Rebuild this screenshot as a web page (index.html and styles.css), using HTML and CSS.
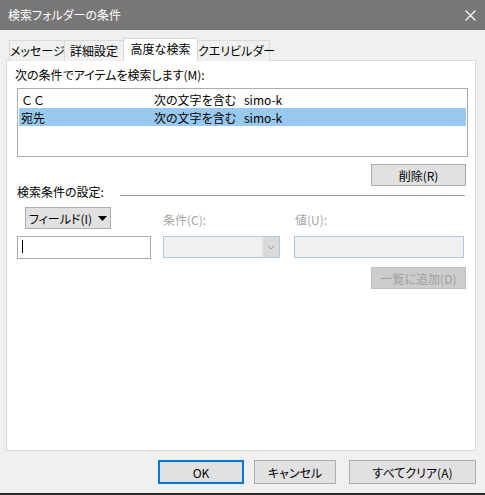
FILE: index.html
```html
<!DOCTYPE html>
<html lang="ja">
<head>
  <meta charset="UTF-8" />
  <meta name="viewport" content="width=device-width, initial-scale=1.0" />
  <title>検索フォルダーの条件</title>
  <link rel="stylesheet" href="styles.css">
</head>
<body>
  <div class="window">
    <div class="titlebar">
      <span>検索フォルダーの条件</span>
      <svg class="close" width="11" height="11" viewBox="0 0 11 11">
        <path d="M0.5 0.5 L10.5 10.5 M10.5 0.5 L0.5 10.5" stroke="#fff" stroke-width="1.1" fill="none" />
      </svg>
    </div>

    <div class="content">
      <div class="tabs">
        <div class="tab tab-msg">メッセージ</div>
        <div class="tab tab-detail">詳細設定</div>
        <div class="tab tab-adv active">高度な検索</div>
        <div class="tab tab-query">クエリビルダー</div>
      </div>

      <div class="panel">
        <div class="label">次の条件でアイテムを検索します(M):</div>
        <div class="listbox">
          <div class="row">
            <span class="col-field fullwidth">ＣＣ</span>
            <span class="col-cond">次の文字を含む</span>
            <span>simo-k</span>
          </div>
          <div class="row selected">
            <span class="col-field">宛先</span>
            <span class="col-cond">次の文字を含む</span>
            <span>simo-k</span>
          </div>
        </div>
        <div class="actions">
          <button class="btn side-btn">削除(R)</button>
        </div>

        <div class="group-head">
          <span class="group-title">検索条件の設定:</span>
          <span class="rule"></span>
        </div>

        <div class="criteria">
          <button class="btn field-btn">
            <span>フィールド(I)</span>
            <svg width="9" height="5" viewBox="0 0 9 5"><path d="M0 0 H9 L4.5 5 Z" fill="#000" /></svg>
          </button>
          <div class="crit-label">条件(C):</div>
          <div class="crit-label value-label">値(U):</div>

          <div class="textbox"><span class="caret"></span></div>
          <div class="combo">
            <span class="combo-arrow">
              <svg width="8" height="5" viewBox="0 0 8 5"><path d="M0.5 0.5 L4 4 L7.5 0.5" stroke="#a8a8a8" fill="none" /></svg>
            </span>
          </div>
          <div class="valuebox"></div>
        </div>

        <div class="actions add-row">
          <button class="btn side-btn disabled">一覧に追加(D)</button>
        </div>
      </div>
    </div>

    <div class="footer">
      <button class="btn ok-btn">OK</button>
      <button class="btn cancel-btn">キャンセル</button>
      <button class="btn clear-btn">すべてクリア(A)</button>
    </div>
  </div>
</body>
</html>
```

FILE: styles.css
```css
body {
  margin: 0;
  font-family: "Noto Sans CJK JP", "Noto Sans", sans-serif;
  font-size: 12px;
  font-feature-settings: "palt";
  color: #000;
  background: #f0f0f0;
  white-space: nowrap;
}
.window {
  width: 485px;
  height: 495px;
  background: #f0f0f0;
  display: flex;
  flex-direction: column;
  border-bottom: 2px solid #2b2b2b;
  box-sizing: border-box;
}
.titlebar {
  height: 30px;
  flex: none;
  background: #777;
  color: #fff;
  display: flex;
  align-items: center;
  justify-content: space-between;
  padding: 0 9px 0 8px;
  line-height: 16px;
}
.content {
  padding-top: 8px;
}
.tabs {
  display: flex;
  align-items: flex-end;
  height: 23px;
  margin-left: 9px;
  margin-bottom: -1px;
  position: relative;
  z-index: 1;
}
.tab {
  height: 21px;
  line-height: 20px;
  border: 1px solid #d9d9d9;
  border-bottom: none;
  box-sizing: border-box;
  text-align: center;
  margin-left: -1px;
  background: #f0f0f0;
}
.tab-msg {
  margin-left: 0;
  width: 56px;
}
.tab-detail {
  width: 60px;
}
.tab-adv {
  width: 75px;
}
.tab-query {
  width: 73px;
}
.tab.active {
  height: 23px;
  line-height: 19px;
  background: #fff;
}
.panel {
  margin-left: 6px;
  width: 470px;
  height: 391px;
  border: 1px solid #d9d9d9;
  background: #fff;
  box-sizing: border-box;
  padding: 6px 0 0 10px;
}
.label {
  line-height: 16px;
  margin-left: -2px;
}
.listbox {
  margin-top: 5px;
  width: 451px;
  height: 69px;
  border: 1px solid #ababab;
  box-sizing: border-box;
  padding: 1px;
}
.row {
  display: flex;
  height: 18px;
  line-height: 16px;
  padding: 2px 0 0 2px;
  box-sizing: border-box;
}
.row.selected {
  background: #99c9ef;
}
.col-field {
  width: 133px;
}
.fullwidth {
  font-feature-settings: normal;
}
.col-cond {
  width: 90px;
}
.actions {
  display: flex;
  justify-content: flex-end;
  padding-right: 9px;
  margin-top: 7px;
}
.btn {
  font: inherit;
  color: #000;
  background: #e1e1e1;
  border: 1px solid #adadad;
  box-sizing: border-box;
  padding: 0;
}
.side-btn {
  width: 95px;
  height: 22px;
}
.btn.disabled {
  background: #cccccc;
  border-color: #bfbfbf;
  color: #a0a0a0;
}
.group-head {
  display: flex;
  height: 12px;
  line-height: 12px;
}
.group-title {
  width: 103px;
  flex: none;
}
.rule {
  width: 345px;
  height: 1px;
  background: #a0a0a0;
  margin-top: 9px;
}
.criteria {
  margin-top: 9px;
  display: grid;
  grid-template-columns: 134px 117px 172px;
  grid-template-rows: 22px 23px;
  column-gap: 12px;
  row-gap: 7px;
}
.criteria .valuebox,
.criteria .value-label {
  margin-left: 2px;
}
.field-btn {
  width: 86px;
  height: 22px;
  margin-left: 8px;
  display: flex;
  align-items: center;
  justify-content: center;
  gap: 6px;
}
.crit-label {
  align-self: end;
  line-height: 16px;
  margin-bottom: 1px;
  color: #a6a6a6;
}
.value-label {
  padding-left: 1px;
}
.textbox {
  height: 23px;
  border: 1px solid #ababab;
  box-sizing: border-box;
  background: #fff;
  padding: 3px 0 0 4px;
}
.caret {
  display: block;
  width: 1px;
  height: 13px;
  background: #000;
}
.combo {
  height: 22px;
  border: 1px solid #aec8e6;
  background: #f0f0f0;
  box-sizing: border-box;
  display: flex;
  justify-content: flex-end;
}
.combo-arrow {
  width: 16px;
  background: #dadada;
  border-left: 1px solid #e6e6e6;
  display: flex;
  align-items: center;
  justify-content: center;
}
.valuebox {
  height: 22px;
  border: 1px solid #aec8e6;
  background: #f0f0f0;
  box-sizing: border-box;
}
.add-row {
  margin-top: 8px;
}
.footer {
  display: flex;
  justify-content: flex-end;
  padding: 9px 9px 0 0;
}
.footer .btn {
  height: 24px;
}
.ok-btn {
  width: 86px;
  border: 2px solid #0078d7;
}
.cancel-btn {
  width: 82px;
  margin-left: 10px;
}
.clear-btn {
  width: 127px;
  margin-left: 13px;
}
```
